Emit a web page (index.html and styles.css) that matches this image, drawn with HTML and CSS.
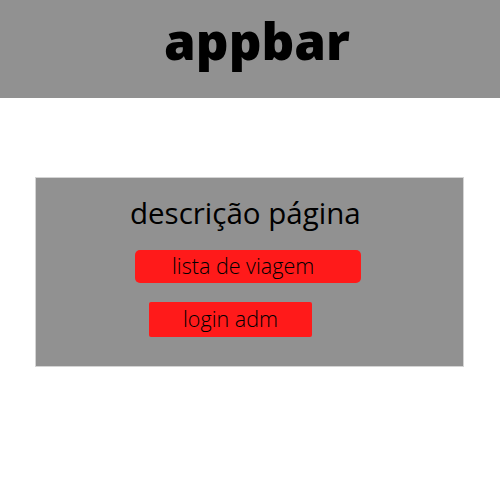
FILE: index.html
```html
<!DOCTYPE html>
<html>
<head>
<meta charset="utf-8">
<link rel="stylesheet" href="styles.css">
</head>
<body>
<header class="appbar"><span class="appbar-title">appbar</span></header>
<main class="card">
  <h1 class="card-title">descrição página</h1>
  <a class="btn btn-list">lista de viagem</a>
  <a class="btn btn-login">login adm</a>
</main>
</body>
</html>
```
FILE: styles.css
```css
html, body {
  margin: 0;
  padding: 0;
  background: #ffffff;
  font-family: "Open Sans", "Liberation Sans", sans-serif;
  color: #000;
}
.appbar {
  height: 98px;
  background: #919191;
  display: flex;
  justify-content: center;
  padding-left: 14px;
  box-sizing: border-box;
}
.appbar-title {
  font-size: 51px;
  font-weight: 800;
  line-height: 80px;
}
.card {
  margin: 79px 0 0 35px;
  width: 429px;
  height: 190px;
  box-sizing: border-box;
  background: #919191;
  border: 1px solid #d4d4d4;
  padding-top: 17px;
  display: flex;
  flex-direction: column;
  align-items: flex-start;
}
.card-title {
  margin: 0 0 0 94px;
  font-size: 29.5px;
  font-weight: 400;
  line-height: 36px;
}
.btn {
  display: block;
  box-sizing: border-box;
  background: #ff1a1a;
  font-size: 21.5px;
  font-weight: 300;
  color: #000;
}
.btn-list {
  margin: 19px 0 0 99px;
  width: 226px;
  height: 33px;
  line-height: 32px;
  border-radius: 5px;
  padding-left: 37px;
}
.btn-login {
  margin: 19px 0 0 113px;
  width: 163px;
  height: 35px;
  line-height: 34px;
  border-radius: 2px;
  padding-left: 34px;
}
```
